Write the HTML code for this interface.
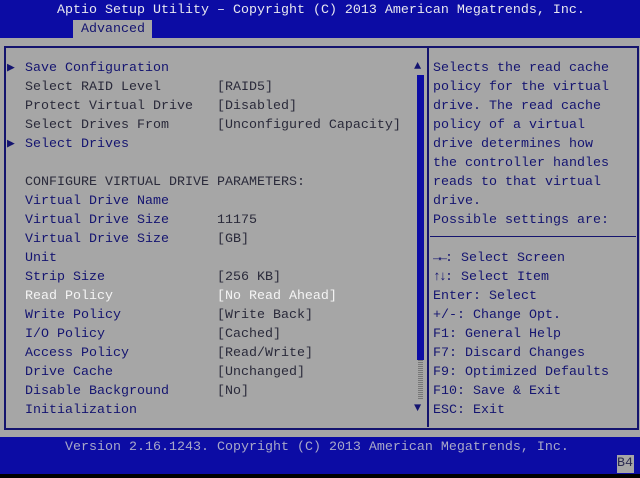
<!DOCTYPE html>
<html><head><meta charset="utf-8"><style>
html,body{margin:0;padding:0}
body{width:640px;height:478px;background:#000;position:relative;overflow:hidden;font-family:"Liberation Mono","DejaVu Sans Mono",monospace;font-size:13.33px}
.a{position:absolute;white-space:pre;line-height:19px}
.n{color:#141470}.d{color:#2a2a3a}.w{color:#f4f4f4}
</style></head><body>
<div style="position:absolute;left:0;top:0;width:640px;height:38px;background:#0c0ca4"></div>
<div class="a" style="left:57px;top:1px;color:#e8e8f0">Aptio Setup Utility – Copyright (C) 2013 American Megatrends, Inc.</div>
<div style="position:absolute;left:73px;top:20px;width:79px;height:18px;background:#a6a6a6"></div>
<div class="a n" style="left:81px;top:20px">Advanced</div>
<div style="position:absolute;left:0;top:38px;width:640px;height:399px;background:#a6a6a6"></div>
<div style="position:absolute;left:4px;top:46px;width:631px;height:380px;border:2px solid #14146e;box-sizing:content-box"></div>
<div style="position:absolute;left:427px;top:47px;width:2px;height:380px;background:#14146e"></div>
<div style="position:absolute;left:430px;top:236px;width:206px;height:1px;background:#14146e"></div>
<div class="a n" style="left:414px;top:57px;font-size:12px">▲</div>
<div class="a n" style="left:414px;top:399px;font-size:12px">▼</div>
<div style="position:absolute;left:417px;top:75px;width:7px;height:285px;background:#0c0ca4"></div>
<div style="position:absolute;left:418px;top:360px;width:5px;height:40px;background:repeating-linear-gradient(#777 0 1px,#a6a6a6 1px 2px)"></div>
<div class="a n" style="left:7px;top:58px;font-size:13px">▶</div>
<div class="a n" style="left:7px;top:134px;font-size:13px">▶</div>
<div class="a" style="left:25px;top:59px"><span class="n">Save Configuration</span>
<span class="d">Select RAID Level       [RAID5]</span>
<span class="d">Protect Virtual Drive   [Disabled]</span>
<span class="d">Select Drives From      [Unconfigured Capacity]</span>
<span class="n">Select Drives</span>

<span class="d">CONFIGURE VIRTUAL DRIVE PARAMETERS:</span>
<span class="n">Virtual Drive Name</span>
<span class="n">Virtual Drive Size</span>      <span class="d">11175</span>
<span class="n">Virtual Drive Size</span>      <span class="d">[GB]</span>
<span class="n">Unit</span>
<span class="n">Strip Size</span>              <span class="d">[256 KB]</span>
<span class="w">Read Policy             [No Read Ahead]</span>
<span class="n">Write Policy</span>            <span class="d">[Write Back]</span>
<span class="n">I/O Policy</span>              <span class="d">[Cached]</span>
<span class="n">Access Policy</span>           <span class="d">[Read/Write]</span>
<span class="n">Drive Cache</span>             <span class="d">[Unchanged]</span>
<span class="n">Disable Background</span>      <span class="d">[No]</span>
<span class="n">Initialization</span></div>
<div class="a n" style="left:433px;top:59px">Selects the read cache
policy for the virtual
drive. The read cache
policy of a virtual
drive determines how
the controller handles
reads to that virtual
drive.
Possible settings are:

<span style="letter-spacing:-2px">→←</span>: Select Screen
<span style="letter-spacing:-2px">↑↓</span>: Select Item
Enter: Select
+/-: Change Opt.
F1: General Help
F7: Discard Changes
F9: Optimized Defaults
F10: Save &amp; Exit
ESC: Exit</div>
<div style="position:absolute;left:0;top:437px;width:640px;height:37px;background:#0c0ca4"></div>
<div class="a" style="left:65px;top:438px;color:#a8a8c8">Version 2.16.1243. Copyright (C) 2013 American Megatrends, Inc.</div>
<div style="position:absolute;left:617px;top:455px;width:17px;height:18px;background:#a6a6a6"></div>
<div class="a" style="left:617px;top:455px;color:#2a2a50;line-height:18px">B4</div>
</body></html>
